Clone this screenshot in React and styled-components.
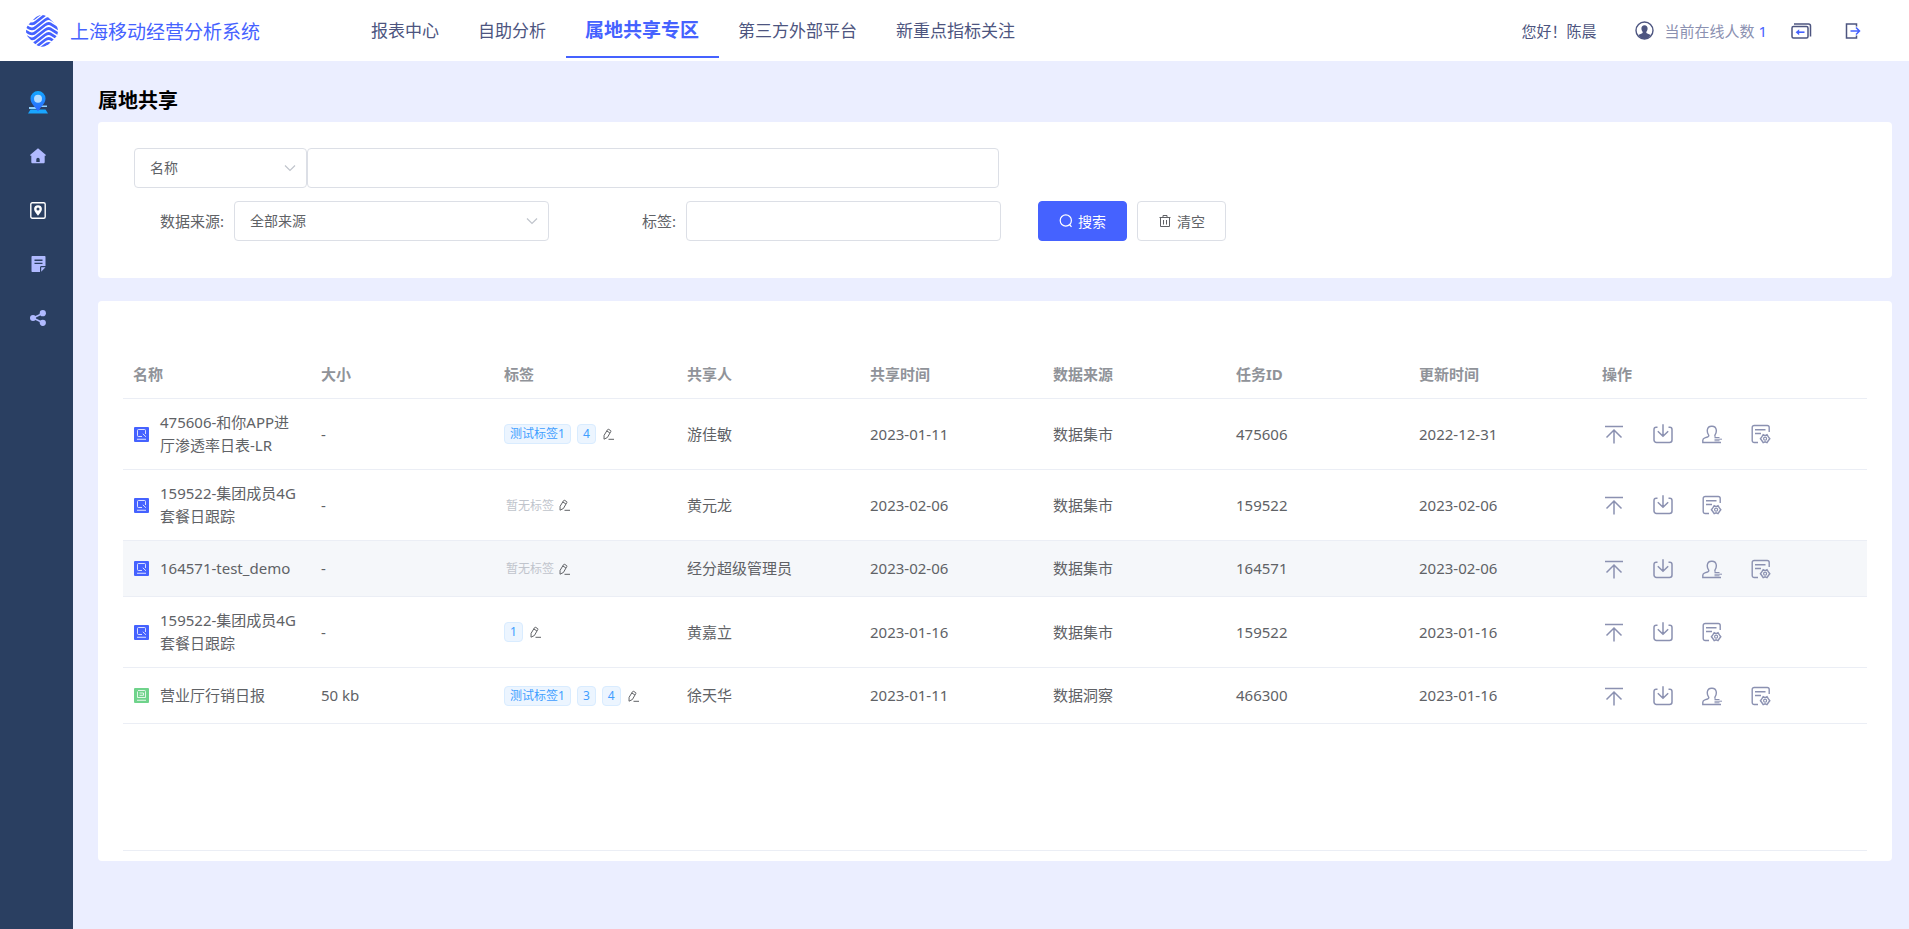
import React from 'react'
import styled, { createGlobalStyle } from 'styled-components'

const palette = {
  primary: '#4562ff',
  navy: '#2a3f61',
  navText: '#4d5580',
  muted: '#8b91b1',
  lilac: '#b0baff',
  page: '#ebeeff',
  text: '#606266',
  heading: '#909399',
  placeholder: '#c0c4cc',
  border: '#dcdfe6',
  line: '#ebeef5',
  tag: '#409eff',
}

const GlobalStyle = createGlobalStyle`
  * {
    box-sizing: border-box;
  }
  body {
    margin: 0;
    background: ${palette.page};
    color: ${palette.text};
    font-family: 'Noto Sans', 'Noto Sans CJK SC', sans-serif;
    font-size: 15px;
  }
  button, input, select {
    font-family: inherit;
  }
`

const Header = styled.header`
  display: flex;
  align-items: center;
  height: 61px;
  padding: 0 48px 0 26px;
  background: #fff;
`

const Brand = styled.a`
  display: flex;
  align-items: center;
  gap: 12px;
  color: ${palette.primary};
  font-size: 19px;
  text-decoration: none;
  white-space: nowrap;
`

const Nav = styled.nav`
  display: flex;
  align-self: stretch;
  margin-left: 92px;
`

const NavLink = styled.a`
  display: flex;
  align-items: center;
  height: 58px;
  padding: 2px 20px 0 19px;
  border-bottom: 2px solid ${(props) => (props.$active ? palette.primary : 'transparent')};
  color: ${(props) => (props.$active ? palette.primary : palette.navText)};
  font-size: ${(props) => (props.$active ? '19px' : '17px')};
  font-weight: ${(props) => (props.$active ? 700 : 400)};
  text-decoration: none;
  white-space: nowrap;
`

const UserBar = styled.div`
  display: flex;
  align-items: center;
  margin-left: auto;
  color: ${palette.navText};
  white-space: nowrap;
`

const Online = styled.div`
  display: flex;
  align-items: center;
  gap: 11px;
  margin: 0 24px 0 38px;
  color: ${palette.muted};
`

const Count = styled.span`
  color: ${palette.primary};
`

const IconButton = styled.button`
  display: flex;
  padding: 0;
  border: 0;
  background: none;
  color: ${(props) => props.color || palette.navText};
  cursor: pointer;
`

const HeaderTools = styled.div`
  display: flex;
  align-items: center;
  gap: 33px;
`

const Body = styled.div`
  display: flex;
  min-height: calc(100vh - 61px);
`

const Sidebar = styled.aside`
  display: flex;
  flex-direction: column;
  flex: none;
  align-items: center;
  gap: 34px;
  width: 73px;
  padding: 31px 0 31px 3px;
  background: ${palette.navy};
`

const SideLink = styled.a`
  display: flex;
  align-items: center;
  justify-content: center;
  width: 40px;
  height: 20px;
  color: ${(props) => (props.$active ? '#fff' : palette.lilac)};
`

const Main = styled.main`
  flex: 1;
  min-width: 0;
  padding: 25px 17px 25px 25px;
`

const PageTitle = styled.h1`
  margin: 0 0 6px;
  color: #000;
  font-size: 20px;
  font-weight: 700;
  line-height: 30px;
`

const Card = styled.section`
  border-radius: 4px;
  background: #fff;
`

const SearchCard = styled(Card)`
  display: flex;
  flex-direction: column;
  gap: 13px;
  margin-bottom: 23px;
  padding: 26px 36px 37px;
`

const SearchRow = styled.form`
  display: flex;
  align-items: center;
`

const Field = styled.div`
  display: flex;
  align-items: center;
  gap: 10px;
  margin-left: ${(props) => props.$indent || '0'};
`

const FieldLabel = styled.label`
  padding-bottom: 2px;
  white-space: nowrap;
`

const TextInput = styled.input`
  width: ${(props) => props.$width};
  height: 40px;
  padding: 0 15px 2px;
  border: 1px solid ${palette.border};
  border-radius: 4px;
  background: #fff;
  color: ${palette.text};
  font-size: 14px;
`

const SelectBox = styled.div`
  position: relative;
  width: ${(props) => props.$width};

  svg {
    position: absolute;
    top: 13px;
    right: 10px;
    pointer-events: none;
  }
`

const StyledSelect = styled.select`
  width: 100%;
  height: 40px;
  padding: 0 30px 2px 15px;
  border: 1px solid ${palette.border};
  border-radius: 4px;
  appearance: none;
  background: #fff;
  color: ${palette.text};
  font-size: 14px;
`

const Buttons = styled.div`
  display: flex;
  gap: 10px;
  margin-left: 37px;
`

const Button = styled.button`
  display: flex;
  align-items: center;
  gap: 5px;
  height: 40px;
  padding: 0 20px 1px;
  border: 1px solid ${(props) => (props.$primary ? palette.primary : palette.border)};
  border-radius: 4px;
  background: ${(props) => (props.$primary ? palette.primary : '#fff')};
  color: ${(props) => (props.$primary ? '#fff' : palette.text)};
  font-size: 14px;
  cursor: pointer;
`

const TableCard = styled(Card)`
  padding: 49px 25px 10px;
`

const TableWrap = styled.div`
  min-height: 501px;
  border-bottom: 1px solid ${palette.line};
`

const Table = styled.table`
  width: 100%;
  border-collapse: separate;
  border-spacing: 0;
  table-layout: fixed;
`

const Th = styled.th`
  height: 49px;
  padding: 0 10px;
  border-bottom: 1px solid ${palette.line};
  color: ${palette.heading};
  font-weight: 700;
  line-height: 23px;
  text-align: left;
`

const Tr = styled.tr`
  background: ${(props) => (props.$hover ? '#f5f7fa' : '#fff')};
`

const Td = styled.td`
  height: 56px;
  padding: 12px 10px;
  border-bottom: 1px solid ${palette.line};
  line-height: 23px;
`

const NameCell = styled.div`
  display: flex;
  align-items: center;
  gap: 11px;

  svg {
    flex: none;
    margin-left: 1px;
  }
`

const TagList = styled.div`
  display: flex;
  align-items: center;
  gap: ${(props) => (props.$empty ? '4px' : '6px')};
`

const Tag = styled.span`
  padding: 0 5px;
  border: 1px solid #d9ecff;
  border-radius: 4px;
  background: #ecf5ff;
  color: ${palette.tag};
  font-size: 12px;
  line-height: 18px;
  white-space: nowrap;
`

const NoTag = styled.span`
  padding-left: 2px;
  color: ${palette.placeholder};
  font-size: 12px;
`

const Actions = styled.div`
  display: flex;
  gap: 29px;
  padding-left: 2px;
`

// vertical offsets of the wave bands in the logo
const bands = [-5, 0, 5, 10, 15, 20, 25, 30, 35]

const BrandLogo = () => (
  <svg width="32" height="32" viewBox="0 0 32 32" fill="none">
    <clipPath id="brand">
      <path d="M16 0c3 0 5 1 8 4l5 5c4 4 4 10 0 14l-5 5c-5 5-11 5-16 0l-5-5c-4-4-4-10 0-14l5-5c3-3 5-4 8-4z" />
    </clipPath>
    <g clipPath="url(#brand)" stroke={palette.primary} strokeWidth="2.700">
      {bands.map((y) => (
        <path key={y} d={`M-4 ${y - 1}L3 ${y + 3}Q7 ${y + 5} 10 ${y + 2}L19 ${y - 5}Q23 ${y - 8} 26 ${y - 5}L36 ${y + 1}`} />
      ))}
    </g>
  </svg>
)

const AvatarIcon = () => (
  <svg width="19" height="19" viewBox="0 0 19 19">
    <circle cx="9.5" cy="9.5" r="8.5" fill="none" stroke="currentColor" strokeWidth="1.4" />
    <path
      fill="currentColor"
      d="M9.500 4.300c2 0 3.200 1.500 3.100 3.500-.1 1.500-.7 2.300-1.200 3-.4.800.1 1.500.9 1.800l3.500 1.500A8.500 8.500 0 0 1 9.500 18a8.500 8.500 0 0 1-6.300-3.900l3.500-1.500c.8-.3 1.300-1 .9-1.800-.5-.7-1.100-1.500-1.200-3-.1-2 1.100-3.500 3.100-3.500z"
    />
  </svg>
)

const SwitchBackIcon = () => (
  <svg width="21" height="16" viewBox="0 0 21 16" fill="none" stroke="currentColor" strokeWidth="1.500">
    <rect x="1" y="3.500" width="16" height="11.500" rx="1.500" />
    <path d="M3 1h14.500a2 2 0 0 1 2 2v10.500" />
    <path d="M13.500 9.200H6" stroke={palette.primary} strokeWidth="1.600" />
    <path d="M8.200 6.200v6L4.600 9.200z" fill={palette.primary} stroke="none" />
  </svg>
)

const LogoutIcon = () => (
  <svg width="16" height="16" viewBox="0 0 16 16" fill="none" stroke="currentColor" strokeWidth="1.500">
    <path d="M11.500 3.500V1H1.500v14h10v-2.500" />
    <path d="M5.500 8h9M11 4.500L14.500 8 11 11.500" stroke={palette.primary} />
  </svg>
)

const PlaceLogo = () => (
  <svg width="20" height="23" viewBox="0 0 20 23">
    <defs>
      <linearGradient id="place" x1="0" y1="0" x2="0" y2="1">
        <stop offset="0" stopColor="#12a8ff" />
        <stop offset="1" stopColor="#2f63ff" />
      </linearGradient>
    </defs>
    <path fill="#8fd0ff" d="M1 16h8v2H1zM13 14.500h6V16h-6z" />
    <path fill="#19a6ff" d="M2.500 18.500h15L20 22.500H0z" />
    <path fill="url(#place)" d="M10 0a7.500 7.500 0 0 1 7.500 7.500c0 5-4.500 8-7.500 13-3-5-7.500-8-7.500-13A7.500 7.500 0 0 1 10 0z" />
    <circle cx="10" cy="7.800" r="4" fill="#b5dcff" />
  </svg>
)

const HomeIcon = () => (
  <svg width="16" height="16" viewBox="0 0 16 16" fill="currentColor">
    <path fillRule="evenodd" d="M8 .3l7.700 6.400c.5.500.2 1-.4 1h-.6v6.300c0 .9-.4 1.300-1.300 1.300H2.600c-.9 0-1.300-.4-1.300-1.300V7.700H.7c-.6 0-.9-.5-.4-1zM6.300 14h3.400v-2.600a1.700 1.700 0 0 0-3.400 0z" />
  </svg>
)

const PinBoxIcon = () => (
  <svg width="16" height="17" viewBox="0 0 16 17">
    <rect x=".8" y=".8" width="14.400" height="15.400" rx="1.500" fill="none" stroke="currentColor" strokeWidth="1.400" />
    <path fill="currentColor" fillRule="evenodd" d="M8 3.200a3.900 3.900 0 0 1 3.900 3.900c0 2.500-2.100 4.200-3.900 6.600-1.800-2.400-3.900-4.100-3.900-6.600A3.900 3.900 0 0 1 8 3.200zm0 2.400a1.500 1.500 0 1 0 0 3 1.500 1.500 0 0 0 0-3z" />
  </svg>
)

const NoteIcon = () => (
  <svg width="15" height="16" viewBox="0 0 15 16">
    <path fill="currentColor" d="M1.500 0h12c.7 0 1 .4 1 1v9h-4c-.9 0-1.500.6-1.500 1.500V16H1.500c-.7 0-1-.4-1-1V1c0-.6.300-1 1-1zM10.200 11.300h4.300l-4.300 4.400z" />
    <path stroke={palette.navy} strokeWidth="1.400" d="M3.500 4.200h8M3.500 7.400h8" />
  </svg>
)

const ShareIcon = () => (
  <svg width="16" height="16" viewBox="0 0 16 16" fill="currentColor">
    <path stroke="currentColor" strokeWidth="1.500" fill="none" d="M13 3.200L3 8l10 4.800" />
    <circle cx="12.800" cy="3.200" r="3.100" />
    <circle cx="3" cy="8" r="3" />
    <circle cx="12.800" cy="12.800" r="3.100" />
  </svg>
)

const ChevronIcon = () => (
  <svg width="14" height="14" viewBox="0 0 14 14" fill="none" stroke={palette.placeholder} strokeWidth="1.200">
    <path d="M2 4.500L7 9.500l5-5" />
  </svg>
)

const SearchIcon = () => (
  <svg width="14" height="14" viewBox="0 0 14 14" fill="none" stroke="currentColor" strokeWidth="1.200">
    <circle cx="6.800" cy="6.500" r="5.600" />
    <path d="M10.500 10.500l2 2.300" />
  </svg>
)

const TrashIcon = () => (
  <svg width="14" height="14" viewBox="0 0 14 14" fill="none" stroke="currentColor">
    <path d="M1.500 3.500h11M5 3.500v-2h4v2M2.500 3.500v9h9v-9M5.500 6v4.500M8.500 6v4.500" />
  </svg>
)

const EditIcon = () => (
  <svg width="12" height="12" viewBox="0 0 12 12" fill="none" stroke="currentColor">
    <path d="M6.500 1.300l2.200 1.300c.3.200.4.500.2.800L5.400 9.500 2 11.200l.1-3.900 3.500-5.700c.2-.4.500-.5.900-.3zM4.800 3l3 1.800M6.500 11.300H12" />
  </svg>
)

const FileIcon = ({ green }) => (
  <svg width="15" height="15" viewBox="0 0 15 15" fill="none" stroke="#fff">
    <rect width="15" height="15" rx="1" fill={green ? '#6fd38b' : palette.primary} stroke="none" />
    {green ? (
      <path opacity=".8" d="M4 2.500h6.500q1 0 1 1v6h-8v-6M5.500 5h4v2.300h-4" />
    ) : (
      <path opacity=".8" d="M8 9.500H4.500q-1 0-1-1v-5q0-1 1-1h6q1 0 1 1V7M8.800 6.800l3.200 3" />
    )}
    <path opacity=".7" d="M3 12.300h9" strokeWidth="1.200" />
  </svg>
)

const TopIcon = () => (
  <svg width="20" height="20" viewBox="0 0 20 20" fill="none" stroke="currentColor" strokeWidth="1.500">
    <path d="M1 2.500h18M10 6v13.500M2.500 13.500L10 6l7.500 7.500" />
  </svg>
)

const DownloadIcon = () => (
  <svg width="20" height="20" viewBox="0 0 20 20" fill="none" stroke="currentColor" strokeWidth="1.500">
    <path d="M4.500 3.200H3.200a2.200 2.200 0 0 0-2.200 2.200V16A2.500 2.500 0 0 0 3.500 18.500h13A2.500 2.500 0 0 0 19 16V5.400a2.200 2.200 0 0 0-2.200-2.200h-1.300M10 .3v12M4.800 7.200L10 12.300l5.200-5.100" />
  </svg>
)

const UserIcon = () => (
  <svg width="20" height="20" viewBox="0 0 20 20" fill="none" stroke="currentColor" strokeWidth="1.400">
    <path d="M19 18.500H.8v-2.200c0-1.300.7-2 2-2.400l2.700-.9c1.300-.5 1.700-1.300.9-2.400C5.600 9.500 5.300 8.500 5.300 7V6A4.400 4.400 0 0 1 9.800 2.300 4.400 4.400 0 0 1 14.300 6v1c0 1.500-.3 2.500-1.100 3.600-.6.900-.3 1.600.3 2" />
    <path d="M12.500 13.500h5M12.500 15.200h7.500M12.500 16.800h5" strokeWidth="1" />
  </svg>
)

const LogIcon = () => (
  <svg width="20" height="20" viewBox="0 0 20 20" fill="none" stroke="currentColor" strokeWidth="1.400">
    <path d="M7 18.500H3.200a2 2 0 0 1-2-2V3.500a2 2 0 0 1 2-2h13a2 2 0 0 1 2 2V8M4 5.800h10.500M4 9.500h6" />
    <path d="M12.200 10.700l1.900.9 1.900-.9 1.400 2.200 1.400 1.800-1.400 1.800-1.400 2.200-1.900-.9-1.900.9-1.400-2.200-1.400-1.800 1.400-1.800z" />
    <circle cx="14.100" cy="14.700" r="1.500" strokeWidth="1.200" />
  </svg>
)

const navItems = ['报表中心', '自助分析', '属地共享专区', '第三方外部平台', '新重点指标关注']

const sideItems = [
  { label: '属地', icon: PlaceLogo },
  { label: '首页', icon: HomeIcon },
  { label: '属地共享', icon: PinBoxIcon, active: true },
  { label: '报表', icon: NoteIcon },
  { label: '分享', icon: ShareIcon },
]

const columns = [
  { title: '名称', width: 188 },
  { title: '大小', width: 183 },
  { title: '标签', width: 183 },
  { title: '共享人', width: 183 },
  { title: '共享时间', width: 183 },
  { title: '数据来源', width: 183 },
  { title: '任务ID', width: 183 },
  { title: '更新时间', width: 183 },
  { title: '操作', width: 275 },
]

const rows = [
  { name: '475606-和你APP进厅渗透率日表-LR', size: '-', tags: ['测试标签1', '4'], owner: '游佳敏', shared: '2023-01-11', source: '数据集市', task: '475606', updated: '2022-12-31', canAssign: true },
  { name: '159522-集团成员4G套餐日跟踪', size: '-', tags: [], owner: '黄元龙', shared: '2023-02-06', source: '数据集市', task: '159522', updated: '2023-02-06' },
  { name: '164571-test_demo', size: '-', tags: [], owner: '经分超级管理员', shared: '2023-02-06', source: '数据集市', task: '164571', updated: '2023-02-06', canAssign: true, hover: true },
  { name: '159522-集团成员4G套餐日跟踪', size: '-', tags: ['1'], owner: '黄嘉立', shared: '2023-01-16', source: '数据集市', task: '159522', updated: '2023-01-16' },
  { name: '营业厅行销日报', size: '50 kb', tags: ['测试标签1', '3', '4'], owner: '徐天华', shared: '2023-01-11', source: '数据洞察', task: '466300', updated: '2023-01-16', canAssign: true, green: true },
]

const TopBar = () => (
  <Header>
    <Brand href="#">
      <BrandLogo />
      上海移动经营分析系统
    </Brand>
    <Nav>
      {navItems.map((item) => (
        <NavLink key={item} href="#" $active={item === '属地共享专区'}>{item}</NavLink>
      ))}
    </Nav>
    <UserBar>
      <span>您好！陈晨</span>
      <Online>
        <IconButton aria-label="个人中心"><AvatarIcon /></IconButton>
        <span>当前在线人数 <Count>1</Count></span>
      </Online>
      <HeaderTools>
        <IconButton aria-label="切换"><SwitchBackIcon /></IconButton>
        <IconButton aria-label="退出"><LogoutIcon /></IconButton>
      </HeaderTools>
    </UserBar>
  </Header>
)

const SearchPanel = () => (
  <SearchCard>
    <SearchRow>
      <SelectBox $width="173px">
        <StyledSelect aria-label="查询字段">
          <option>名称</option>
        </StyledSelect>
        <ChevronIcon />
      </SelectBox>
      <TextInput type="text" aria-label="名称" $width="692px" />
    </SearchRow>
    <SearchRow>
      <Field $indent="26px">
        <FieldLabel htmlFor="source">数据来源:</FieldLabel>
        <SelectBox $width="315px">
          <StyledSelect id="source">
            <option>全部来源</option>
          </StyledSelect>
          <ChevronIcon />
        </SelectBox>
      </Field>
      <Field $indent="93px">
        <FieldLabel htmlFor="tag">标签:</FieldLabel>
        <TextInput id="tag" type="text" $width="315px" />
      </Field>
      <Buttons>
        <Button type="button" $primary><SearchIcon />搜索</Button>
        <Button type="reset"><TrashIcon />清空</Button>
      </Buttons>
    </SearchRow>
  </SearchCard>
)

const TagCell = ({ tags }) => (
  <TagList $empty={tags.length === 0}>
    {tags.map((tag) => <Tag key={tag}>{tag}</Tag>)}
    {tags.length === 0 && <NoTag>暂无标签</NoTag>}
    <IconButton aria-label="编辑标签" color={palette.text}><EditIcon /></IconButton>
  </TagList>
)

const ShareRow = ({ row }) => (
  <Tr $hover={row.hover}>
    <Td>
      <NameCell>
        <FileIcon green={row.green} />
        <span>{row.name}</span>
      </NameCell>
    </Td>
    <Td>{row.size}</Td>
    <Td><TagCell tags={row.tags} /></Td>
    <Td>{row.owner}</Td>
    <Td>{row.shared}</Td>
    <Td>{row.source}</Td>
    <Td>{row.task}</Td>
    <Td>{row.updated}</Td>
    <Td>
      <Actions>
        <IconButton aria-label="置顶" color={palette.muted}><TopIcon /></IconButton>
        <IconButton aria-label="下载" color={palette.muted}><DownloadIcon /></IconButton>
        {row.canAssign && <IconButton aria-label="授权" color={palette.muted}><UserIcon /></IconButton>}
        <IconButton aria-label="日志" color={palette.muted}><LogIcon /></IconButton>
      </Actions>
    </Td>
  </Tr>
)

const App = () => (
  <>
    <GlobalStyle />
    <TopBar />
    <Body>
      <Sidebar>
        {sideItems.map(({ label, icon: Icon, active }) => (
          <SideLink key={label} href="#" aria-label={label} $active={active}><Icon /></SideLink>
        ))}
      </Sidebar>
      <Main>
        <PageTitle>属地共享</PageTitle>
        <SearchPanel />
        <TableCard>
          <TableWrap>
            <Table>
              <colgroup>
                {columns.map((column) => <col key={column.title} width={column.width} />)}
              </colgroup>
              <thead>
                <tr>
                  {columns.map((column) => <Th key={column.title}>{column.title}</Th>)}
                </tr>
              </thead>
              <tbody>
                {rows.map((row, index) => <ShareRow key={index} row={row} />)}
              </tbody>
            </Table>
          </TableWrap>
        </TableCard>
      </Main>
    </Body>
  </>
)

export default App
